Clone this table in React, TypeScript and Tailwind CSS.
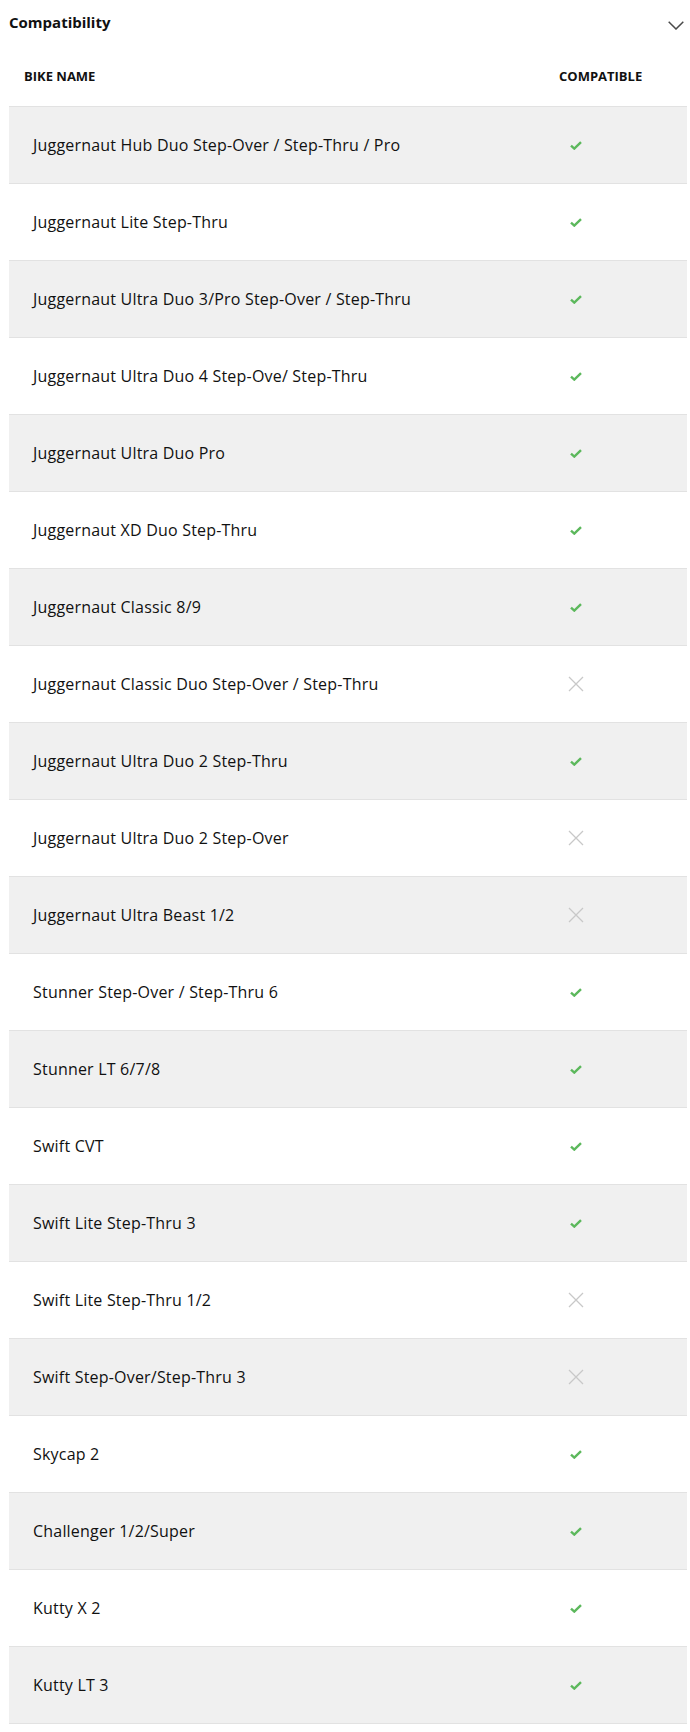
type Bike = { name: string; ok: boolean }

const bikes: Bike[] = [
  { name: 'Juggernaut Hub Duo Step-Over / Step-Thru / Pro', ok: true },
  { name: 'Juggernaut Lite Step-Thru', ok: true },
  { name: 'Juggernaut Ultra Duo 3/Pro Step-Over / Step-Thru', ok: true },
  { name: 'Juggernaut Ultra Duo 4 Step-Ove/ Step-Thru', ok: true },
  { name: 'Juggernaut Ultra Duo Pro', ok: true },
  { name: 'Juggernaut XD Duo Step-Thru', ok: true },
  { name: 'Juggernaut Classic 8/9', ok: true },
  { name: 'Juggernaut Classic Duo Step-Over / Step-Thru', ok: false },
  { name: 'Juggernaut Ultra Duo 2 Step-Thru', ok: true },
  { name: 'Juggernaut Ultra Duo 2 Step-Over', ok: false },
  { name: 'Juggernaut Ultra Beast 1/2', ok: false },
  { name: 'Stunner Step-Over / Step-Thru 6', ok: true },
  { name: 'Stunner LT 6/7/8', ok: true },
  { name: 'Swift CVT', ok: true },
  { name: 'Swift Lite Step-Thru 3', ok: true },
  { name: 'Swift Lite Step-Thru 1/2', ok: false },
  { name: 'Swift Step-Over/Step-Thru 3', ok: false },
  { name: 'Skycap 2', ok: true },
  { name: 'Challenger 1/2/Super', ok: true },
  { name: 'Kutty X 2', ok: true },
  { name: 'Kutty LT 3', ok: true },
]

function Check() {
  return (
    <svg width="12" height="9" viewBox="0 0 12 9" fill="none">
      <path d="M1 4.6 L4.3 7.6 L11 1.2" stroke="#5cb85c" strokeWidth="2.4" />
    </svg>
  )
}

function Cross() {
  return (
    <svg width="16" height="16" viewBox="0 0 16 16" fill="none">
      <path d="M1 1 L15 15 M15 1 L1 15" stroke="#c8c8c8" strokeWidth="1.3" />
    </svg>
  )
}

function Chevron() {
  return (
    <svg width="16" height="9" viewBox="0 0 16 9" fill="none">
      <path d="M0.7 0.7 L8 8 L15.3 0.7" stroke="#4a4a4a" strokeWidth="1.5" />
    </svg>
  )
}

export default function App() {
  return (
    <div className="bg-white pl-[9px] pr-[3px] font-['Open_Sans',sans-serif] text-[#111]">
      <div className="flex h-[44px] items-center justify-between">
        <h2 className="text-[15px] font-bold">Compatibility</h2>
        <div className="mr-[3px] mt-[6px] flex">
          <Chevron />
        </div>
      </div>
      <div className="flex h-[62px] items-center pt-[4px] text-[13px] font-bold">
        <div className="flex-1 pl-[15px]">BIKE NAME</div>
        <div className="w-[128px]">COMPATIBLE</div>
      </div>
      <div className="border-b border-[#e2e2e2]">
        {bikes.map((bike, i) => (
          <div
            key={bike.name}
            className={
              'flex h-[77px] items-center border-t border-[#e2e2e2]' +
              ' ' +
              (i % 2 === 0 ? 'bg-[#f0f0f0]' : 'bg-white')
            }
          >
            <div className="flex-1 pl-[24px] text-[16px] tracking-[0.2px]">{bike.name}</div>
            <div className="flex w-[128px]">
              <div className="flex w-[34px] justify-center">{bike.ok ? <Check /> : <Cross />}</div>
            </div>
          </div>
        ))}
      </div>
    </div>
  )
}
